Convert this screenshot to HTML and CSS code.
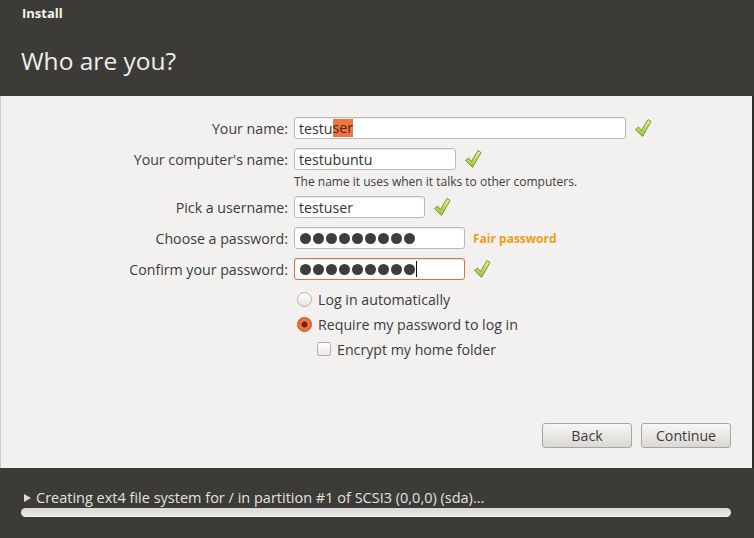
FILE: index.html
```html
<!DOCTYPE html>
<html>
<head>
<meta charset="utf-8">
<link rel="stylesheet" href="styles.css">
</head>
<body>
<div class="window">
  <header class="top">
    <div class="app-title">Install</div>
    <h1 class="page-title">Who are you?</h1>
  </header>
  <main class="content">
    <div class="form">
      <div class="row r1">
        <label class="label">Your name:</label>
        <div class="field">
          <div class="input w-name">testu<span class="sel">ser</span></div>
          <svg class="check" viewBox="0 0 18 20"><defs><linearGradient id="g1" x1="0" y1="0" x2="0" y2="1"><stop offset="0" stop-color="#e4f59a"/><stop offset="1" stop-color="#94c134"/></linearGradient></defs><path d="M1.5 11.5 L4.5 9 L7.5 12.5 L14 1.5 L17 3.5 L8.5 18.5 Z" fill="url(#g1)" stroke="#7a9a2e" stroke-width="1" stroke-linejoin="round"/></svg>
        </div>
      </div>
      <div class="row r2">
        <label class="label">Your computer's name:</label>
        <div class="field">
          <div class="input w-comp">testubuntu</div>
          <svg class="check" viewBox="0 0 18 20"><defs><linearGradient id="g2" x1="0" y1="0" x2="0" y2="1"><stop offset="0" stop-color="#e4f59a"/><stop offset="1" stop-color="#94c134"/></linearGradient></defs><path d="M1.5 11.5 L4.5 9 L7.5 12.5 L14 1.5 L17 3.5 L8.5 18.5 Z" fill="url(#g2)" stroke="#7a9a2e" stroke-width="1" stroke-linejoin="round"/></svg>
        </div>
      </div>
      <div class="hint">The name it uses when it talks to other computers.</div>
      <div class="row r3">
        <label class="label">Pick a username:</label>
        <div class="field">
          <div class="input w-user">testuser</div>
          <svg class="check" viewBox="0 0 18 20"><defs><linearGradient id="g3" x1="0" y1="0" x2="0" y2="1"><stop offset="0" stop-color="#e4f59a"/><stop offset="1" stop-color="#94c134"/></linearGradient></defs><path d="M1.5 11.5 L4.5 9 L7.5 12.5 L14 1.5 L17 3.5 L8.5 18.5 Z" fill="url(#g3)" stroke="#7a9a2e" stroke-width="1" stroke-linejoin="round"/></svg>
        </div>
      </div>
      <div class="row r4">
        <label class="label">Choose a password:</label>
        <div class="field">
          <div class="input w-pass"><span class="dots"><i></i><i></i><i></i><i></i><i></i><i></i><i></i><i></i><i></i></span></div>
          <span class="strength">Fair password</span>
        </div>
      </div>
      <div class="row r5">
        <label class="label">Confirm your password:</label>
        <div class="field">
          <div class="input w-pass focus"><span class="dots"><i></i><i></i><i></i><i></i><i></i><i></i><i></i><i></i><i></i></span><span class="caret"></span></div>
          <svg class="check" viewBox="0 0 18 20"><defs><linearGradient id="g4" x1="0" y1="0" x2="0" y2="1"><stop offset="0" stop-color="#e4f59a"/><stop offset="1" stop-color="#94c134"/></linearGradient></defs><path d="M1.5 11.5 L4.5 9 L7.5 12.5 L14 1.5 L17 3.5 L8.5 18.5 Z" fill="url(#g4)" stroke="#7a9a2e" stroke-width="1" stroke-linejoin="round"/></svg>
        </div>
      </div>
      <div class="opt o1"><span class="radio"></span><span>Log in automatically</span></div>
      <div class="opt o2"><span class="radio on"></span><span>Require my password to log in</span></div>
      <div class="opt o3 sub"><span class="box"></span><span>Encrypt my home folder</span></div>
    </div>
    <div class="buttons">
      <button class="btn">Back</button>
      <button class="btn">Continue</button>
    </div>
  </main>
  <footer class="bottom">
    <div class="status"><span class="tri"></span>Creating ext4 file system for / in partition #1 of SCSI3 (0,0,0) (sda)...</div>
    <div class="progress"></div>
  </footer>
</div>
</body>
</html>
```
FILE: styles.css
```css
* { box-sizing: border-box; }
html, body { margin: 0; padding: 0; }
body {
  width: 754px;
  height: 538px;
  overflow: hidden;
  font-family: "Open Sans", "DejaVu Sans", sans-serif;
  background: #3c3b37;
}
.window {
  display: flex;
  flex-direction: column;
  height: 538px;
}
.top {
  height: 96px;
  background: #3c3b37;
  padding: 3px 0 0 22px;
  color: #f2f1f0;
}
.app-title {
  font-size: 13px;
  font-weight: bold;
  line-height: 20px;
  color: #f5f4f2;
}
.page-title {
  margin: 21px 0 0 -1px;
  font-size: 24.5px;
  font-weight: normal;
  line-height: 34px;
  color: #efeeec;
}
.content {
  height: 372px;
  background: #f2f1f0;
  display: flex;
  flex-direction: column;
  justify-content: space-between;
  border-left: 1px solid #cfcdc9;
  border-right: 2px solid #2e2d2a;
}
.form {
  padding-top: 21px;
  display: flex;
  flex-direction: column;
  font-size: 14.2px;
  color: #3c3c3c;
}
.row {
  display: grid;
  grid-template-columns: 287px 1fr;
  column-gap: 6px;
  height: 22px;
  align-items: center;
}
.r2, .r4, .r5 { margin-top: 9px; }
.r3 { margin-top: 6px; }
.label {
  text-align: right;
  white-space: nowrap;
}
.field {
  display: flex;
  align-items: center;
  height: 22px;
}
.input {
  height: 22px;
  background: #fff;
  border: 1px solid #bdbab4;
  border-radius: 3px;
  box-shadow: inset 0 1px 1px rgba(0,0,0,0.08);
  padding: 0 4px;
  display: flex;
  align-items: center;
  color: #333;
  font-size: 14.2px;
}
.w-name { width: 332px; }
.w-comp { width: 162px; }
.w-user { width: 131px; }
.w-pass { width: 171px; }
.focus { border-color: #e2703e; }
.sel {
  background: #ef7642;
  color: #5a2413;
  line-height: 18px;
}
.check {
  width: 18px;
  height: 20px;
  margin-left: 8px;
}
.hint {
  margin: 4px 0 0 293px;
  font-size: 12px;
  line-height: 16px;
  color: #3c3c3c;
}
.dots {
  display: flex;
  gap: 2px;
  margin-left: 1px;
}
.dots i {
  display: block;
  width: 11px;
  height: 11px;
  border-radius: 50%;
  background: #3d3d3d;
}
.caret {
  display: block;
  width: 1px;
  height: 16px;
  background: #111;
  margin-left: 1px;
}
.strength {
  margin-left: 8px;
  font-size: 12px;
  font-weight: bold;
  color: #f39c1c;
}
.opt {
  display: flex;
  align-items: center;
  gap: 6px;
  height: 22px;
  margin-left: 296px;
  font-size: 14.2px;
  color: #3c3c3c;
}
.o1 { margin-top: 8px; }
.o2, .o3 { margin-top: 3px; }
.sub { margin-left: 316px; }
.radio {
  width: 15px;
  height: 15px;
  border-radius: 50%;
  border: 1px solid #b7b4ae;
  background: linear-gradient(#ffffff, #e6e4e0);
}
.radio.on {
  border-color: #c4532a;
  background: radial-gradient(circle, #6b2412 0 2.5px, #f07a46 3.5px, #e26332 100%);
}
.box {
  width: 14px;
  height: 14px;
  border: 1px solid #b3b0aa;
  border-radius: 2px;
  background: linear-gradient(#ffffff, #ebe9e6);
}
.buttons {
  display: flex;
  justify-content: flex-end;
  gap: 9px;
  padding: 0 21px 20px 0;
}
.btn {
  width: 90px;
  height: 25px;
  border: 1px solid #a9a6a1;
  border-radius: 3px;
  background: linear-gradient(#f7f7f6, #dad8d4);
  font-family: "Open Sans", "DejaVu Sans", sans-serif;
  font-size: 14.2px;
  color: #3c3c3c;
  padding: 0;
}
.bottom {
  height: 70px;
  background: #3c3b37;
  padding: 20px 23px 0 21px;
}
.status {
  display: flex;
  align-items: center;
  font-size: 14.5px;
  line-height: 20px;
  color: #e3e2df;
  white-space: nowrap;
}
.tri {
  width: 0;
  height: 0;
  border-left: 7px solid #dcdbd8;
  border-top: 4.5px solid transparent;
  border-bottom: 4.5px solid transparent;
  margin: 0 5px 0 3px;
}
.progress {
  height: 9px;
  margin-top: 0px;
  border-radius: 5px;
  background: linear-gradient(#d9d8d4, #e9e8e5);
  border-bottom: 1px solid #f4f4f2;
}
```
